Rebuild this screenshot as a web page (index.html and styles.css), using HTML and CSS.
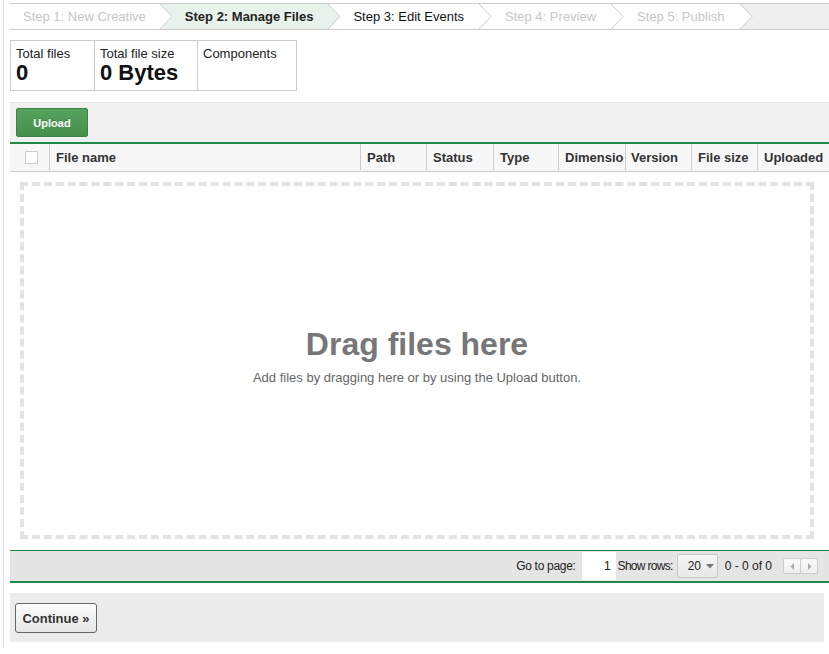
FILE: index.html
```html
<!DOCTYPE html>
<html>
<head>
<meta charset="utf-8">
<link rel="stylesheet" href="styles.css">
</head>
<body>
<div class="page">
  <div class="steps">
    <span class="step done">Step 1: New Creative</span>
    <svg class="sep" width="14" height="25" viewBox="0 0 14 25"><rect width="14" height="25" fill="#e6f2ea"/><polygon points="0,0 1,0 13,12.5 1,25 0,25" fill="#fff"/><polyline points="1,0 13,12.5 1,25" fill="none" stroke="#ccc"/></svg>
    <span class="step current">Step 2: Manage Files</span>
    <svg class="sep" width="14" height="25" viewBox="0 0 14 25"><rect width="14" height="25" fill="#fff"/><polygon points="0,0 1,0 13,12.5 1,25 0,25" fill="#e6f2ea"/><polyline points="1,0 13,12.5 1,25" fill="none" stroke="#ccc"/></svg>
    <span class="step next">Step 3: Edit Events</span>
    <svg class="sep" width="14" height="25" viewBox="0 0 14 25"><rect width="14" height="25" fill="#fff"/><polyline points="1,0 13,12.5 1,25" fill="none" stroke="#ccc"/></svg>
    <span class="step done">Step 4: Preview</span>
    <svg class="sep" width="14" height="25" viewBox="0 0 14 25"><rect width="14" height="25" fill="#fff"/><polyline points="1,0 13,12.5 1,25" fill="none" stroke="#ccc"/></svg>
    <span class="step done">Step 5: Publish</span>
    <svg class="sep" width="14" height="25" viewBox="0 0 14 25"><rect width="14" height="25" fill="#eee"/><polygon points="0,0 1,0 13,12.5 1,25 0,25" fill="#fff"/><polyline points="1,0 13,12.5 1,25" fill="none" stroke="#ccc"/></svg>
    <span class="step-fill"></span>
  </div>

  <div class="stats">
    <div class="stat s1"><div class="stat-label">Total files</div><div class="stat-value">0</div></div>
    <div class="stat s2"><div class="stat-label">Total file size</div><div class="stat-value">0 Bytes</div></div>
    <div class="stat s3"><div class="stat-label">Components</div></div>
  </div>

  <div class="grid">
    <div class="toolbar">
      <button class="upload">Upload</button>
    </div>
    <div class="header">
      <div class="col c-check"><span class="checkbox"></span></div>
      <div class="col c-name">File name</div>
      <div class="col c-path">Path</div>
      <div class="col c-status">Status</div>
      <div class="col c-type">Type</div>
      <div class="col c-dim">Dimensio</div>
      <div class="col c-ver">Version</div>
      <div class="col c-size">File size</div>
      <div class="col c-up">Uploaded</div>
    </div>
    <div class="droparea">
      <div class="dropzone">
        <div class="drop-title">Drag files here</div>
        <div class="drop-sub">Add files by dragging here or by using the Upload button.</div>
      </div>
    </div>
    <div class="pager">
      <span class="pg-label">Go to page:</span>
      <span class="pg-input">1</span>
      <span class="pg-label pg-rows">Show rows:</span>
      <span class="pg-select">20 <svg width="8" height="5" viewBox="0 0 8 5"><polygon points="0,0 8,0 4,4.5" fill="#777"/></svg></span>
      <span class="pg-count">0 - 0 of 0</span>
      <span class="pg-arrows">
        <span class="pg-btn"><svg width="5" height="7" viewBox="0 0 5 7"><polygon points="4,0 4,7 0.5,3.5" fill="#aaa"/></svg></span><span class="pg-btn"><svg width="5" height="7" viewBox="0 0 5 7"><polygon points="1,0 1,7 4.5,3.5" fill="#aaa"/></svg></span>
      </span>
    </div>
  </div>

  <div class="actions">
    <button class="continue">Continue »</button>
  </div>
</div>
</body>
</html>
```
FILE: styles.css
```css
html, body {
  margin: 0;
  padding: 0;
  background: #fff;
  overflow: hidden;
}
body {
  font-family: "Liberation Sans", Arial, sans-serif;
  color: #222;
  width: 829px;
  height: 654px;
}
.page {
  margin-left: 3px;
  border-left: 1px solid #ddd;
  padding-left: 6px;
  height: 648px;
  padding-top: 3px;
  box-sizing: border-box;
  width: 840px;
}

/* steps */
.steps {
  display: flex;
  align-items: stretch;
  height: 25px;
  border-top: 1px solid #ccc;
  border-bottom: 1px solid #ccc;
  font-size: 13px;
  width: 830px;
}
.step {
  display: flex;
  align-items: center;
  padding: 0 14px 0 13px;
  white-space: nowrap;
  background: #fff;
}
.step:first-child { padding-left: 13px; padding-right: 13px; }
.step.done { color: #c6c6c6; }
.step.current { font-weight: bold; color: #222; background: #e6f2ea; padding-left: 12px; }
.step.next { color: #111; padding-left: 12px; }
.sep { display: block; flex: none; }
.step-fill { flex: 1; background: #eee; }

/* stats */
.stats {
  display: flex;
  margin-top: 10px;
  width: 287px;
  height: 51px;
  border: 1px solid #ccc;
  box-sizing: border-box;
}
.stat {
  padding: 5px 6px 0 5px;
  box-sizing: border-box;
}
.s1 { width: 84px; border-right: 1px solid #ccc; }
.s2 { width: 103px; border-right: 1px solid #ccc; }
.s3 { flex: 1; }
.stat-label { font-size: 13px; line-height: 16px; color: #222; }
.stat-value { font-size: 22px; font-weight: bold; line-height: 22px; color: #111; }

/* grid */
.grid {
  margin-top: 11px;
  width: 819px;
}
.toolbar {
  height: 39px;
  background: #f1f1f1;
  border-top: 1px solid #e6e6e6;
  border-bottom: 2px solid #1e8a45;
  box-sizing: content-box;
  display: flex;
  align-items: flex-start;
  padding-left: 6px;
}
.upload {
  margin-top: 5px;
  width: 72px;
  height: 29px;
  border: 1px solid #3b8341;
  border-radius: 2px;
  background: linear-gradient(#55a35c, #468f4c);
  color: #fff;
  font-family: "Liberation Sans", Arial, sans-serif;
  font-weight: bold;
  font-size: 11px;
  padding: 0;
  text-shadow: 0 -1px 0 rgba(0,0,0,0.2);
}
.header {
  display: flex;
  height: 26px;
  padding-bottom: 1px;
  background: #f7f7f7;
  border-bottom: 1px solid #ccc;
  font-size: 13px;
  font-weight: bold;
  color: #333;
  width: 830px;
}
.col {
  display: flex;
  align-items: center;
  padding-left: 6px;
  box-sizing: border-box;
  border-right: 1px solid #ccc;
  white-space: nowrap;
  overflow: hidden;
}
.c-check { width: 40px; padding-left: 15px; }
.checkbox {
  border: 1px solid #ccc;
  background: #fff;
  box-sizing: border-box;
  width: 13px; height: 13px;
}
.c-name { width: 311px; }
.c-path { width: 66px; }
.c-status { width: 67px; }
.c-type { width: 65px; }
.c-dim { width: 67px; padding-left: 6px; }
.c-ver { width: 66px; padding-left: 5px; }
.c-size { width: 66px; }
.c-up { width: 80px; border-right: none; }

.droparea {
  width: 814px;
  padding: 10px 10px 11px 10px;
  box-sizing: border-box;
  background: #fff;
}
.dropzone {
  height: 357px;
  border: 4px dashed #e3e3e3;
  box-sizing: border-box;
  display: flex;
  flex-direction: column;
  align-items: center;
  justify-content: center;
  padding-bottom: 10px;
}
.drop-title {
  font-size: 32px;
  font-weight: bold;
  color: #777;
  line-height: 36px;
}
.drop-sub {
  font-size: 13px;
  color: #666;
  margin-top: 8px;
}

.pager {
  height: 30px;
  background: #e5e5e5;
  border-top: 1px solid #1e8a45;
  border-bottom: 2px solid #1e8a45;
  display: flex;
  align-items: center;
  justify-content: flex-end;
  padding-right: 11px;
  font-size: 12px;
  color: #222;
}
.pg-label { margin-right: 6px; letter-spacing: -0.3px; }
.pg-rows { margin-right: 6px; letter-spacing: -0.7px; }
.pg-input {
  width: 34px;
  height: 28px;
  background: #fff;
  box-sizing: border-box;
  text-align: right;
  padding-right: 5px;
  line-height: 28px;
  margin-right: 2px;
  align-self: flex-end;
  margin-bottom: 1px;
}
.pg-select {
  width: 41px;
  height: 24px;
  box-sizing: border-box;
  border: 1px solid #c8c8c8;
  border-radius: 2px;
  background: linear-gradient(#f5f5f5, #e8e8e8);
  display: flex;
  align-items: center;
  padding-left: 10px;
  gap: 5px;
  margin-left: -2px;
  margin-right: 7px;
}
.pg-count { margin-right: 11px; }
.pg-arrows { display: flex; }
.pg-btn {
  width: 18px;
  height: 16px;
  border: 1px solid #ccc;
  box-sizing: border-box;
  background: linear-gradient(#fafafa, #eee);
  display: flex;
  align-items: center;
  justify-content: center;
  border-radius: 2px;
}
.pg-btn + .pg-btn { margin-left: -1px; }

.actions {
  margin-top: 10px;
  width: 814px;
  height: 49px;
  background: #ececec;
  padding: 10px 0 0 5px;
  box-sizing: border-box;
}
.continue {
  width: 82px;
  height: 30px;
  border: 1px solid #666;
  border-radius: 3px;
  background: linear-gradient(#fcfcfc, #e6e6e6);
  font-family: "Liberation Sans", Arial, sans-serif;
  font-weight: bold;
  font-size: 13px;
  color: #333;
  padding: 0;
}
```
